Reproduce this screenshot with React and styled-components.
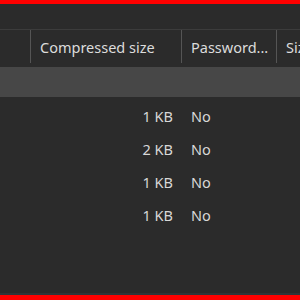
import styled, { createGlobalStyle } from 'styled-components';

const Global = createGlobalStyle`
  html, body { margin: 0; padding: 0; background: #2b2b2b; }
  body { font-family: "Noto Sans", "Open Sans", sans-serif; }
`;

const Frame = styled.div`
  width: 300px;
  height: 300px;
  box-sizing: border-box;
  border-top: 4px solid #ff0000;
  border-bottom: 5px solid #ff0000;
  background: #2b2b2b;
  display: flex;
  flex-direction: column;
  overflow: hidden;
`;

const Toolbar = styled.div`
  height: 25px;
  flex: none;
`;

const Header = styled.div`
  display: grid;
  grid-template-columns: 31px 151px 95px 1fr;
  height: 33px;
  border-top: 1px solid #3c3c3c;
  flex: none;
`;

const HeadCell = styled.div`
  display: flex;
  align-items: center;
  padding-left: 9px;
  color: #dcdcdc;
  font-size: 14.5px;
  white-space: nowrap;
  overflow: hidden;
  border-right: 1px solid #555555;
  &:last-child { border-right: none; }
`;

const GroupBar = styled.div`
  margin-top: 4px;
  height: 30px;
  background: #474747;
  flex: none;
`;

const Body = styled.div`
  flex: 1;
  padding-top: 2px;
`;

const Row = styled.div`
  display: grid;
  grid-template-columns: 31px 151px 95px 1fr;
  height: 33px;
  align-items: center;
  color: #d8d8d8;
  font-size: 14.5px;
`;

const Cell = styled.div`
  padding: 0 9px;
  text-align: ${(p) => (p.$right ? 'right' : 'left')};
  white-space: nowrap;
`;

const Footer = styled.div`
  height: 2px;
  background: #2f3438;
  flex: none;
`;

const rows = ['1 KB', '2 KB', '1 KB', '1 KB'];

export default function App() {
  return (
    <>
      <Global />
      <Frame>
        <Toolbar />
        <Header>
          <HeadCell />
          <HeadCell>Compressed size</HeadCell>
          <HeadCell>Password...</HeadCell>
          <HeadCell>Size</HeadCell>
        </Header>
        <GroupBar />
        <Body>
          {rows.map((size, i) => (
            <Row key={i}>
              <Cell />
              <Cell $right>{size}</Cell>
              <Cell>No</Cell>
              <Cell />
            </Row>
          ))}
        </Body>
        <Footer />
      </Frame>
    </>
  );
}
